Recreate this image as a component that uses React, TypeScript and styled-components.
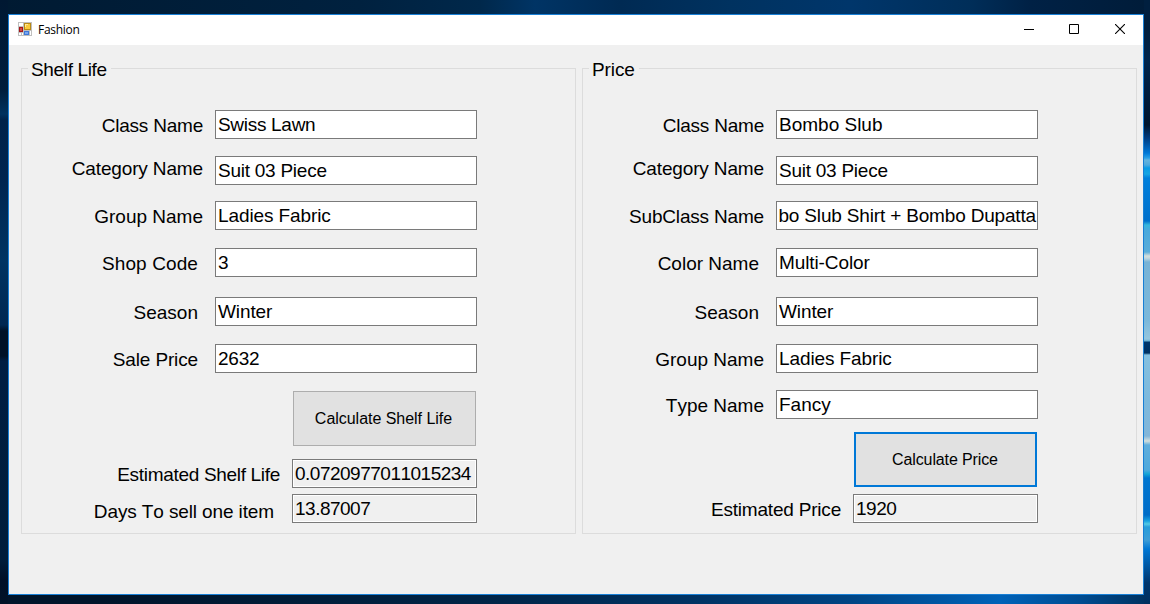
import React from "react";
import styled, { createGlobalStyle } from "styled-components";

const GlobalStyle = createGlobalStyle`
  * { box-sizing: border-box; }
  body { margin: 0; overflow: hidden; }
`;

const Desktop = styled.main`
  width: 1150px;
  height: 604px;
  padding: 14px 6px 9px 8px;
  font-family: "Liberation Sans", Arial, sans-serif;
  font-kerning: none;
  color: #000;
  background:
    linear-gradient(180deg, #001f3f 0, #001f3f 30px, #00254c 60px, #001a38 105px, #00162f 125px, #003c80 138px, #0078d7 153px, #28a0e6 158px, #65b4df 160px, #4fa9dc 165px, #0a9ce6 168px, #17a5e2 174px, #0080dc 178px, #0070cb 221px, #36b6dc 225px, #4aa9dc 230px, #5badd9 252px, #d4dedc 256px, #c3d8df 258px, #78b3d6 262px, #7bb8da 320px, #94c6de 339px, #67aed0 341px, #00376c 342px, #003162 353px, #85c0df 355px, #7db9dc 400px, #82b6d9 436px, #d4dfdd 441px, #60aedc 445px, #4fa9dc 470px, #14a5d6 474px, #0076d0 478px, #006cc7 515px, #18a2df 521px, #54c9e4 524px, #279dda 527px, #3e9dd6 540px, #0077d4 549px, #0059a5 565px, #00366d 583px, #00305f 604px) right top / 6px 604px no-repeat,
    linear-gradient(180deg, #001832 0, #001d3c 90px, #00325f 114px, #00234a 120px, #002550 180px, #003462 260px, #002752 325px, #001126 331px, #001126 356px, #001e43 361px, #001d3a 560px, #001028 580px, #001227 604px) left top / 8px 604px no-repeat,
    linear-gradient(90deg, #001a32 0, #00213f 360px, #00284b 480px, #003465 535px, #002a53 620px, #003260 730px, #00366b 850px, #002e59 970px, #002145 1030px, #001c39 1150px) left top / 1150px 14px no-repeat,
    linear-gradient(90deg, #00142a 0, #00142a 100px, #001d39 300px, #002548 500px, #003364 700px, #004584 850px, #0062b8 1000px, #004c91 1080px, #00315e 1150px) left bottom / 1150px 9px no-repeat;
`;

const Window = styled.section`
  width: 1136px;
  height: 581px;
  display: flex;
  flex-direction: column;
  border: 1px solid #187fd5;
  background: #f0f0f0;
`;

const TitleBar = styled.header`
  height: 30px;
  flex: none;
  display: flex;
  align-items: center;
  background: #fff;
  padding-left: 9px;
`;

const Title = styled.span`
  flex: 1;
  margin-left: 6px;
  font: 12px/16px "Open Sans", "Noto Sans", sans-serif;
  letter-spacing: -0.3px;
`;

const Caption = styled.button`
  width: 46px;
  height: 30px;
  padding: 0 0 2px;
  border: 0;
  background: none;
  display: flex;
  align-items: center;
  justify-content: center;
  svg { display: block; }
`;

const Content = styled.div`
  display: grid;
  grid-template-columns: 555px 555px;
  column-gap: 6px;
  padding: 13px 0 0 12px;
`;

const Group = styled.fieldset`
  height: 476px;
  min-width: 0;
  margin: 0;
  padding: 1px 0 0;
  border: 1px solid #dcdcdc;
`;

const Legend = styled.legend<{ $track: number }>`
  height: 21px;
  margin-left: 6px;
  padding: 0 4px 0 3px;
  font-size: 19px;
  line-height: 23px;
  letter-spacing: ${(p) => p.$track}px;
`;

const Fields = styled.div`
  display: flex;
  flex-direction: column;
  width: 455px;
`;

const Row = styled.div<{ $gap: number }>`
  display: flex;
  justify-content: flex-end;
  height: 29px;
  margin-top: ${(p) => p.$gap}px;
`;

const Label = styled.label<{ $shift: number; $right: number; $track: number }>`
  margin: ${(p) => 4 + p.$shift}px ${(p) => p.$right}px 0 0;
  height: 22px;
  font-size: 19px;
  line-height: 22px;
  white-space: nowrap;
  letter-spacing: ${(p) => p.$track}px;
`;

const TextBox = styled.div<{ $result?: boolean; $end?: boolean; $track: number }>`
  width: ${(p) => (p.$result ? 185 : 262)}px;
  height: 29px;
  display: flex;
  justify-content: ${(p) => (p.$end ? "flex-end" : "flex-start")};
  border: 1px solid #7a7a7a;
  background: ${(p) => (p.$result ? "#f0f0f0" : "#fff")};
  box-shadow: inset 0 0 0 1px #fff;
  padding: 3px ${(p) => (p.$end ? 1 : 2)}px 0 ${(p) => (p.$end ? 1 : 2)}px;
  font-size: 19px;
  line-height: 22px;
  white-space: nowrap;
  overflow: hidden;
  letter-spacing: ${(p) => p.$track}px;
`;

const Action = styled.button<{ $gap: number; $focused?: boolean }>`
  width: 183px;
  height: 55px;
  align-self: flex-end;
  margin: ${(p) => p.$gap}px 1px 0 0;
  padding: 0 ${(p) => (p.$focused ? 1 : 2)}px 0 0;
  border: ${(p) => (p.$focused ? "2px solid #0078d7" : "1px solid #adadad")};
  background: #e1e1e1;
  color: #000;
  font: 16px/20px "Liberation Sans", Arial, sans-serif;
  font-kerning: none;
  letter-spacing: ${(p) => (p.$focused ? -0.12 : -0.03)}px;
`;

type FieldData = {
  label: string;
  value: string;
  gap: number;
  shift?: number;
  right?: number;
  track?: number;
  valueTrack?: number;
  result?: boolean;
  end?: boolean;
};

const shelfFields: FieldData[] = [
  { label: "Class Name", value: "Swiss Lawn", gap: 30, right: 12, track: -0.22, valueTrack: -0.3 },
  { label: "Category Name", value: "Suit 03 Piece", gap: 17, shift: -2, right: 12, track: -0.14, valueTrack: -0.25 },
  { label: "Group Name", value: "Ladies Fabric", gap: 16, right: 12, valueTrack: -0.1 },
  { label: "Shop Code", value: "3", gap: 18, right: 17, track: 0.1 },
  { label: "Season", value: "Winter", gap: 20, right: 17, valueTrack: -0.1 },
  { label: "Sale Price", value: "2632", gap: 18, right: 17, track: -0.14, valueTrack: -0.2 },
];

const shelfResults: FieldData[] = [
  { label: "Estimated Shelf Life", value: "0.0720977011015234", gap: 13, right: 12, track: -0.31, valueTrack: -0.5, result: true },
  { label: "Days To sell one item", value: "13.87007", gap: 6, shift: 3, right: 18, track: -0.12, valueTrack: -0.5, result: true },
];

const priceFields: FieldData[] = [
  { label: "Class Name", value: "Bombo Slub", gap: 30, right: 12, track: -0.22 },
  { label: "Category Name", value: "Suit 03 Piece", gap: 17, shift: -2, right: 12, track: -0.14, valueTrack: -0.25 },
  { label: "SubClass Name", value: "bo Slub Shirt + Bombo Dupatta", gap: 16, right: 12, track: -0.18, valueTrack: -0.17, end: true },
  { label: "Color Name", value: "Multi-Color", gap: 18, right: 17, valueTrack: -0.1 },
  { label: "Season", value: "Winter", gap: 20, right: 17, valueTrack: -0.1 },
  { label: "Group Name", value: "Ladies Fabric", gap: 18, right: 12, valueTrack: -0.1 },
  { label: "Type Name", value: "Fancy", gap: 17, right: 12 },
];

const priceResults: FieldData[] = [
  { label: "Estimated Price", value: "1920", gap: 7, right: 12, track: -0.2, valueTrack: -0.5, result: true },
];

const FieldRows = ({ items }: { items: FieldData[] }) => (
  <>
    {items.map((f) => (
      <Row key={f.label} $gap={f.gap}>
        <Label $shift={f.shift ?? 1} $right={f.right ?? 12} $track={f.track ?? 0}>{f.label}</Label>
        <TextBox $result={f.result} $end={f.end} $track={f.valueTrack ?? 0}>{f.value}</TextBox>
      </Row>
    ))}
  </>
);

const FormGlyph = styled.svg`
  display: block;
  margin-bottom: 2px;
`;

const FormIcon = () => (
  <FormGlyph width="14" height="14" viewBox="0 0 14 14" shapeRendering="crispEdges">
    <rect width="14" height="14" fill="#bfbfbf" />
    <path d="M1 1h4v3H1zM1 11h2v2H1zM4 11h1v2H4zM12 9h1v4h-1z" fill="#fff" />
    <rect x="6" y="1" width="7" height="7" fill="#b88a15" />
    <rect x="7" y="2" width="5" height="5" fill="#f8c93c" />
    <path d="M7 2h3v1H8v2H7z" fill="#ffe895" />
    <rect x="1" y="5" width="4" height="5" fill="#a51418" />
    <rect x="2" y="6" width="2" height="3" fill="#d54b43" />
    <rect x="6" y="9" width="5" height="4" fill="#3f78d8" />
    <rect x="7" y="10" width="3" height="2" fill="#78a7f1" />
  </FormGlyph>
);

export default function App() {
  return (
    <>
      <GlobalStyle />
      <Desktop>
        <Window>
          <TitleBar>
            <FormIcon />
            <Title>Fashion</Title>
            <Caption aria-label="Minimize">
              <svg width="12" height="10" shapeRendering="crispEdges"><path d="M2 5h10v1H2z" /></svg>
            </Caption>
            <Caption aria-label="Maximize">
              <svg width="10" height="10"><path d="M.5.5h9v9h-9z" fill="none" stroke="#000" /></svg>
            </Caption>
            <Caption aria-label="Close">
              <svg width="10" height="10"><path d="M0 0l10 10M10 0L0 10" stroke="#000" strokeWidth="1.1" /></svg>
            </Caption>
          </TitleBar>
          <Content>
            <Group>
              <Legend $track={-0.35}>Shelf Life</Legend>
              <Fields>
                <FieldRows items={shelfFields} />
                <Action $gap={18}>Calculate Shelf Life</Action>
                <FieldRows items={shelfResults} />
              </Fields>
            </Group>
            <Group>
              <Legend $track={-0.1}>Price</Legend>
              <Fields>
                <FieldRows items={priceFields} />
                <Action $gap={13} $focused>Calculate Price</Action>
                <FieldRows items={priceResults} />
              </Fields>
            </Group>
          </Content>
        </Window>
      </Desktop>
    </>
  );
}
